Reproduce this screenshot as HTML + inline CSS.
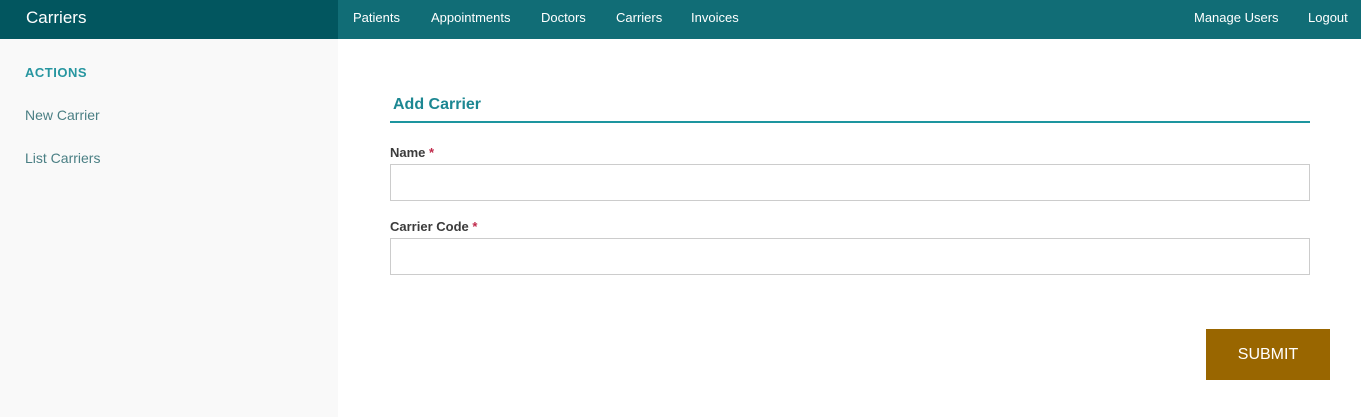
<!DOCTYPE html>
<html><head><meta charset="utf-8"><style>
*{margin:0;padding:0;box-sizing:border-box}
body{width:1361px;height:417px;overflow:hidden;font-family:"Liberation Sans",sans-serif;background:#fff;position:relative}
.top{position:absolute;left:0;top:0;width:1361px;height:39px;background:#116d76}
.brand{position:absolute;left:0;top:0;width:338px;height:39px;background:#02565f;color:#fff;font-size:17px;padding:8px 0 0 26px}
.nav a{position:absolute;top:10px;color:#fff;font-size:13px;text-decoration:none}
.side{position:absolute;left:0;top:39px;width:338px;height:378px;background:#f9f9f9}
.side .h{position:absolute;left:25px;top:26px;color:#2796a0;font-size:13px;font-weight:bold;letter-spacing:0.5px}
.side a{position:absolute;left:25px;color:#4a7f84;font-size:14px;text-decoration:none}
.title{position:absolute;left:390px;top:96px;width:920px;height:27px;border-bottom:2px solid #1d959f;color:#1c8792;font-size:16px;font-weight:bold;padding-left:3px}
.lbl{position:absolute;left:390px;color:#3b3b3b;font-size:13px;font-weight:bold}
.lbl span{color:#c0294a}
.inp{position:absolute;left:390px;width:920px;height:37px;border:1px solid #ccc;background:#fff}
.btn{position:absolute;left:1206px;top:329px;width:124px;height:51px;background:#996600;color:#fff;font-size:16px;text-align:center;line-height:51px}
</style></head><body>
<div class="top"></div>
<div class="brand">Carriers</div>
<div class="nav">
<a style="left:353px">Patients</a><a style="left:431px">Appointments</a><a style="left:541px">Doctors</a><a style="left:616px">Carriers</a><a style="left:691px">Invoices</a><a style="left:1194px">Manage Users</a><a style="left:1308px">Logout</a>
</div>
<div class="side">
<div class="h">ACTIONS</div>
<a style="top:68px">New Carrier</a>
<a style="top:111px">List Carriers</a>
</div>
<div class="title">Add Carrier</div>
<div class="lbl" style="top:145px">Name <span>*</span></div>
<div class="inp" style="top:164px"></div>
<div class="lbl" style="top:219px">Carrier Code <span>*</span></div>
<div class="inp" style="top:238px"></div>
<div class="btn">SUBMIT</div>
</body></html>
